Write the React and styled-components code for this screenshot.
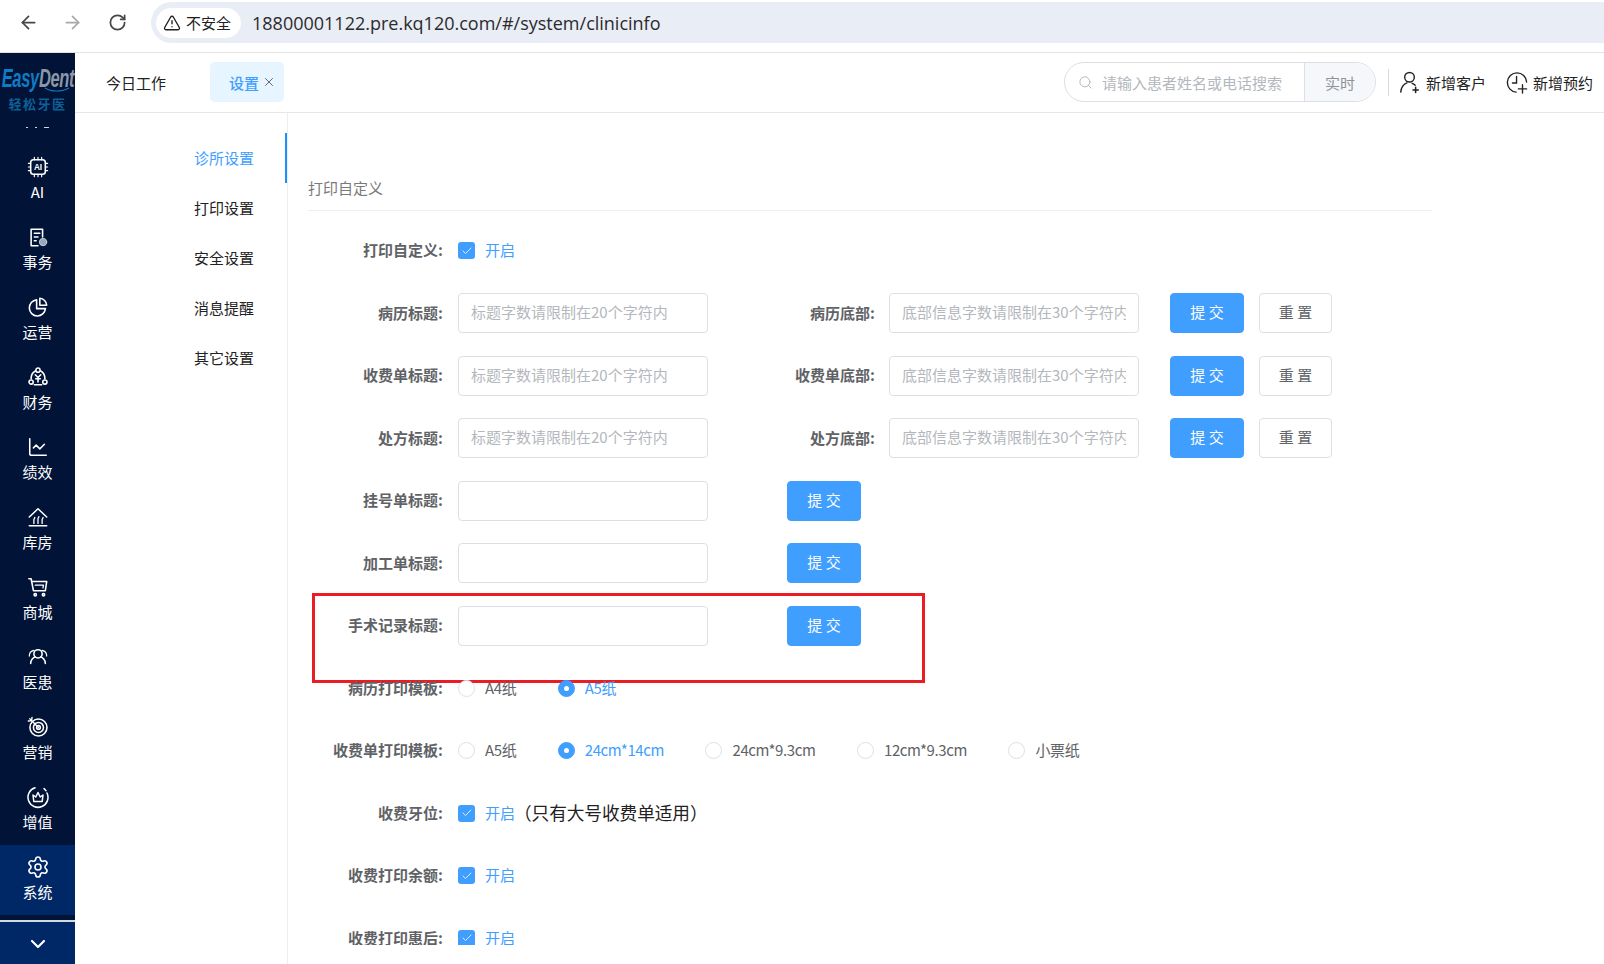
import React from 'react'
import styled, { createGlobalStyle } from 'styled-components'
import { ArrowLeft, ArrowRight, RotateCw, TriangleAlert, Search, ChevronDown, Settings, ChartLine, X, Check } from 'lucide-react'

const Global = createGlobalStyle`
  html, body { margin: 0; padding: 0; height: 100%; background: #fff; overflow: hidden; }
  body { font-family: "Noto Sans CJK SC", "Liberation Sans", sans-serif; font-size: 15px; }
  * { box-sizing: border-box; }
`

const Page = styled.div`
  width: 1604px;
  height: 964px;
  display: flex;
  flex-direction: column;
  overflow: hidden;
`

const ChromeBar = styled.div`
  height: 53px;
  flex: none;
  display: flex;
  align-items: flex-start;
  padding: 2px 0 0 17px;
  background: #fff;
  border-bottom: 1px solid #e2e2e2;
`

const ChromeBtn = styled.div`
  width: 22px;
  height: 41px;
  margin-right: ${({ $gap }) => $gap}px;
  display: flex;
  align-items: center;
  justify-content: center;
  color: ${({ $off }) => ($off ? '#a8a8a8' : '#474747')};
`

const AddressBar = styled.div`
  flex: 1;
  height: 41px;
  display: flex;
  align-items: center;
  padding-left: 5px;
  background: #e9edf6;
  border-radius: 21px 0 0 21px;
`

const Chip = styled.div`
  width: 85px;
  height: 30px;
  display: flex;
  align-items: center;
  gap: 5px;
  padding-left: 7px;
  background: #fff;
  border-radius: 15px;
  font-size: 15px;
  color: #1f1f1f;
`

const Url = styled.span`
  margin-left: 11px;
  font-family: "Open Sans", sans-serif;
  font-size: 18px;
  color: #2b2b2b;
`

const Body = styled.div`
  flex: 1;
  display: flex;
  min-height: 0;
`

const Sidebar = styled.aside`
  width: 75px;
  flex: none;
  display: flex;
  flex-direction: column;
  background: #011337;
`

const LogoBox = styled.div`
  height: 59px;
  flex: none;
  position: relative;
  display: flex;
  flex-direction: column;
  align-items: center;
  padding-top: 12px;
  overflow: hidden;
`

const LogoText = styled.div`
  font-family: "Liberation Sans", sans-serif;
  font-style: italic;
  font-weight: 700;
  font-size: 25px;
  line-height: 26px;
  letter-spacing: -0.5px;
  white-space: nowrap;
  color: #0f7cc4;
  transform: scaleX(0.66);
`

const LogoGrey = styled.span`
  color: #8a97a6;
`

const LogoSmile = styled.svg`
  position: absolute;
  left: 44px;
  top: 34px;
`

const LogoSub = styled.div`
  margin-top: 5px;
  font-size: 13px;
  line-height: 15px;
  font-weight: 700;
  letter-spacing: 1.500px;
  color: #0d5f96;
`

const Dots = styled.div`
  height: 33px;
  flex: none;
  display: flex;
  justify-content: center;
  gap: 7px;
  padding-top: 15px;
`

const Dot = styled.span`
  width: ${({ $w }) => $w}px;
  height: 1px;
  background: #cfd6e2;
`

const NavItem = styled.div`
  height: 70px;
  flex: none;
  display: flex;
  flex-direction: column;
  align-items: center;
  padding-top: 12px;
  background: ${({ $active }) => ($active ? '#002766' : 'transparent')};
  color: #fff;
`

const NavIcon = styled.div`
  width: 24px;
  height: 20px;
  display: flex;
  align-items: center;
  justify-content: center;
`

const NavLabel = styled.span`
  margin-top: 5px;
  font-size: 15px;
  line-height: 20px;
`

const Collapse = styled.div`
  margin-top: 5px;
  flex: 1;
  display: flex;
  justify-content: center;
  padding-top: 10px;
  background: #002766;
  border-top: 2px solid #d5d8de;
  color: #fff;
`

const Main = styled.div`
  flex: 1;
  min-width: 0;
  display: flex;
  flex-direction: column;
`

const Header = styled.header`
  height: 60px;
  flex: none;
  display: flex;
  align-items: center;
  padding: 0 11px 1px 31px;
  border-bottom: 1px solid #e6e6e6;
`

const WorkTab = styled.span`
  color: #222;
  font-size: 15px;
  margin-right: 44px;
`

const ActiveTab = styled.div`
  width: 74px;
  height: 40px;
  display: flex;
  align-items: center;
  padding-left: 19px;
  gap: 3px;
  border-radius: 5px;
  background: #e6f5ff;
  color: #409eff;
  font-size: 15px;
  font-weight: 500;
`

const CloseIcon = styled.span`
  display: flex;
  color: #555;
`

const Tools = styled.div`
  margin-left: auto;
  display: flex;
  align-items: center;
`

const SearchBox = styled.div`
  width: 312px;
  height: 40px;
  display: flex;
  align-items: stretch;
  border: 1px solid #dcdfe6;
  border-radius: 20px;
  overflow: hidden;
  color: #b4b7bd;
`

const SearchField = styled.div`
  flex: 1;
  display: flex;
  align-items: center;
  gap: 9px;
  padding-left: 13px;
  font-size: 15px;
`

const SearchTag = styled.div`
  width: 71px;
  display: flex;
  align-items: center;
  justify-content: center;
  background: #f5f7fa;
  border-left: 1px solid #dcdfe6;
  color: #909399;
  font-size: 15px;
`

const ToolDivider = styled.span`
  width: 1px;
  height: 27px;
  margin: 0 10px 0 12px;
  background: #d9d9d9;
`

const ToolLink = styled.div`
  display: flex;
  align-items: center;
  gap: ${({ $gap }) => $gap}px;
  margin-right: ${({ $mr }) => $mr || 0}px;
  color: #222;
  font-size: 15px;
`

const Content = styled.div`
  flex: 1;
  min-height: 0;
  display: flex;
`

const SubNav = styled.nav`
  width: 213px;
  flex: none;
  padding-top: 20px;
  border-right: 1px solid #eeeeee;
`

const SubItem = styled.div`
  height: 50px;
  display: flex;
  align-items: center;
  justify-content: flex-end;
  padding: 0 31px 2px 0;
  font-size: 15px;
  color: ${({ $active }) => ($active ? '#409eff' : '#222')};
  border-right: 2px solid ${({ $active }) => ($active ? '#1890ff' : 'transparent')};
`

const FormWrap = styled.div`
  width: 1144px;
  height: 832px;
  overflow: hidden;
  padding: 66px 0 0 20px;
`

const Title = styled.div`
  height: 32px;
  line-height: 18px;
  border-bottom: 1px solid #eeeeee;
  color: #7a7a7a;
  font-size: 15px;
`

const Rows = styled.div`
  display: flex;
  flex-direction: column;
  gap: 22.5px;
  padding-top: 19.5px;
`

const Row = styled.div`
  position: relative;
  height: 40px;
  flex: none;
  display: flex;
  align-items: center;
`

const Label = styled.div`
  width: 135px;
  margin-right: 15px;
  padding-bottom: 2px;
  text-align: right;
  color: #606266;
  font-size: 15px;
  font-weight: 700;
  white-space: nowrap;
`

const FootLabel = styled(Label)`
  width: 167px;
  margin-right: 14px;
`

const Input = styled.input`
  width: 250px;
  height: 40px;
  padding: 0 12px 3px;
  border: 1px solid #dcdfe6;
  border-radius: 4px;
  outline: none;
  background: #fff;
  font-family: inherit;
  font-size: 15px;
  &::placeholder { color: #b4b7bd; }
`

const Button = styled.button`
  width: ${({ $reset }) => ($reset ? 73 : 74)}px;
  height: 40px;
  margin-left: ${({ $ml }) => $ml}px;
  padding: 0 0 3px;
  border: 1px solid ${({ $reset }) => ($reset ? '#dcdfe6' : '#409eff')};
  border-radius: 4px;
  background: ${({ $reset }) => ($reset ? '#fff' : '#409eff')};
  color: ${({ $reset }) => ($reset ? '#606266' : '#fff')};
  font-family: inherit;
  font-size: 15px;
`

const CheckItem = styled.div`
  display: flex;
  align-items: center;
  gap: 10px;
  color: #409eff;
`

const CheckMark = styled.span`
  width: 17px;
  height: 17px;
  display: flex;
  align-items: center;
  justify-content: center;
  border-radius: 3px;
  background: #409eff;
  color: #fff;
`

const OptionText = styled.span`
  padding-bottom: 2px;
`

const Note = styled.span`
  margin: 0 0 3px -1px;
  font-size: 17.7px;
  color: #222;
  letter-spacing: -0.1px;
`

const RadioItem = styled.div`
  display: flex;
  align-items: center;
  gap: 10px;
  margin-right: 41.5px;
  letter-spacing: -0.4px;
  color: ${({ $on }) => ($on ? '#409eff' : '#606266')};
`

const RadioDot = styled.span`
  width: 17px;
  height: 17px;
  display: flex;
  align-items: center;
  justify-content: center;
  border-radius: 50%;
  border: 1px solid ${({ $on }) => ($on ? '#409eff' : '#dcdfe6')};
  background: ${({ $on }) => ($on ? '#409eff' : '#fff')};
  &::after {
    content: '';
    width: 5px;
    height: 5px;
    border-radius: 50%;
    background: #fff;
  }
`

const RedMark = styled.div`
  position: absolute;
  left: 4px;
  top: -13px;
  width: 613px;
  height: 90px;
  border: 3px solid #ed1c24;
  pointer-events: none;
`

const icon = { width: 22, height: 22, viewBox: '0 0 24 24', fill: 'none', stroke: 'currentColor', strokeWidth: 1.7, strokeLinecap: 'round', strokeLinejoin: 'round' }

const AiIcon = () => (
  <svg {...icon}>
    <rect x="4" y="4" width="16" height="16" rx="3" />
    <path d="M8 1.5V4M12 1.5V4M16 1.5V4M8 20v2.5M12 20v2.5M16 20v2.5M1.5 8H4M1.5 12H4M1.5 16H4M20 8h2.5M20 12h2.5M20 16h2.5" strokeWidth="1.3" />
    <text x="12" y="15.5" fontSize="9" fontWeight="700" fontFamily="Liberation Sans" textAnchor="middle" fill="currentColor" stroke="none">AI</text>
  </svg>
)
const TaskIcon = () => (
  <svg {...icon}>
    <path d="M17 12V3.5H4.5v18H12" />
    <path d="M8 8h6M8 12h4M8 16h2" />
    <circle cx="17.5" cy="17.5" r="4" fill="#9aa6ba" stroke="#cfd6e2" strokeWidth="1" />
  </svg>
)
const PieIcon = () => (
  <svg {...icon}>
    <path d="M10.5 4.2a8.8 8.8 0 1 0 9.6 9.6h-9.6z" />
    <path d="M14 2.5a8 8 0 0 1 7.5 7.5H14z" />
  </svg>
)
const FinanceIcon = () => (
  <svg {...icon}>
    <path d="M9 5.5C6 7 4.5 10 4.5 14M15 5.5c3 1.500 4.500 4.500 4.500 8.500M8 20.500h8" />
    <circle cx="12" cy="4.500" r="2.300" />
    <circle cx="4.500" cy="17.500" r="2.300" />
    <circle cx="19.500" cy="17.500" r="2.300" />
    <path d="M9 9.500l3 3 3-3M12 12.500v5M9.500 14h5" />
  </svg>
)
const StoreIcon = () => (
  <svg {...icon}>
    <path d="M2.500 12L12 3l9.500 9M5 11.500" />
    <path d="M2.500 21.500h19" />
    <path d="M7.500 19v-4c0-1 1-1.500 1-2.500M12 19v-5c0-1 1-1.500 1-2.500M16.500 19v-4c0-1 1-1.500 1-2.500" strokeWidth="1.400" />
  </svg>
)
const CartIcon = () => (
  <svg {...icon}>
    <path d="M2 3h2.500l2.500 13h13l1.500-10H6" />
    <path d="M9 10h9l-.6 3" strokeWidth="1.400" />
    <circle cx="9" cy="20.500" r="1.300" />
    <circle cx="18" cy="20.500" r="1.300" />
  </svg>
)
const PeopleIcon = () => (
  <svg {...icon}>
    <circle cx="12" cy="8.500" r="4.500" />
    <path d="M4 19c0-4 3-6.500 5-7M20 19c0-4-3-6.500-5-7" />
    <path d="M7.500 4.800C4 5.500 2.500 8 2.500 11M16.500 4.800c3.500.7 5 3.200 5 6.200M1.500 16.500" strokeWidth="1.300" />
  </svg>
)
const TargetIcon = () => (
  <svg {...icon}>
    <circle cx="12.500" cy="12.500" r="9.300" />
    <circle cx="12.500" cy="12.500" r="5.500" />
    <circle cx="12.500" cy="12.500" r="2" />
    <path d="M12.500 12.500L3 3M1.500 5.500L5 5l.5-3.500" strokeWidth="1.500" />
  </svg>
)
const CrownIcon = () => (
  <svg {...icon} width={24} height={24} strokeWidth={1.5}>
    <path d="M9 2.800A10 10 0 1 0 21 8" />
    <path d="M18 3.500L20 5.800" />
    <path d="M7 10l2.800 2 2.200-4.500 2.200 4.500 2.800-2-.8 6.500H7.800z" />
  </svg>
)
const PersonPlus = () => (
  <svg width="21" height="23" viewBox="0 0 24 26" fill="none" stroke="currentColor" strokeWidth="1.600" strokeLinecap="round">
    <circle cx="12" cy="7" r="5.500" />
    <path d="M2 24c.5-6 3.500-9 7-10.500M15 14c1.500.5 2.500 1.200 3.500 2.200" />
    <path d="M19 18.500v6M16 21.500h6" strokeWidth="1.800" />
  </svg>
)
const ClockPlus = () => (
  <svg width="22" height="23" viewBox="0 0 24 25" fill="none" stroke="currentColor" strokeWidth="1.500" strokeLinecap="round">
    <path d="M11 23A10.500 10.500 0 1 1 22.500 12" />
    <path d="M11.500 6v7H7" />
    <path d="M18 15v9M13.500 19.500h9" />
  </svg>
)

const navItems = [
  ['AI', <AiIcon />],
  ['事务', <TaskIcon />],
  ['运营', <PieIcon />],
  ['财务', <FinanceIcon />],
  ['绩效', <ChartLine size={22} strokeWidth={1.7} />],
  ['库房', <StoreIcon />],
  ['商城', <CartIcon />],
  ['医患', <PeopleIcon />],
  ['营销', <TargetIcon />],
  ['增值', <CrownIcon />],
  ['系统', <Settings size={24} strokeWidth={1.6} />],
]

const subItems = ['诊所设置', '打印设置', '安全设置', '消息提醒', '其它设置']
const titlePlaceholder = '标题字数请限制在20个字符内'
const footPlaceholder = '底部信息字数请限制在30个字符内'

const Enabled = () => (
  <CheckItem>
    <CheckMark><Check size={12} strokeWidth={1.6} /></CheckMark>
    <OptionText>开启</OptionText>
  </CheckItem>
)

const Radio = ({ on, children }) => (
  <RadioItem $on={on}>
    <RadioDot $on={on} />
    <OptionText>{children}</OptionText>
  </RadioItem>
)

const FullRow = ({ title, foot }) => (
  <Row>
    <Label>{title}:</Label>
    <Input placeholder={titlePlaceholder} />
    <FootLabel>{foot}:</FootLabel>
    <Input placeholder={footPlaceholder} />
    <Button $ml={31}>提 交</Button>
    <Button $ml={15} $reset>重 置</Button>
  </Row>
)

const ShortRow = ({ title, children }) => (
  <Row>
    <Label>{title}:</Label>
    <Input />
    <Button $ml={79}>提 交</Button>
    {children}
  </Row>
)

export default function App() {
  return (
    <Page>
      <Global />
      <ChromeBar>
        <ChromeBtn $gap={22}><ArrowLeft size={21} strokeWidth={2} /></ChromeBtn>
        <ChromeBtn $gap={23} $off><ArrowRight size={21} strokeWidth={2} /></ChromeBtn>
        <ChromeBtn $gap={23}><RotateCw size={19} strokeWidth={2.2} /></ChromeBtn>
        <AddressBar>
          <Chip><TriangleAlert size={18} strokeWidth={1.8} />不安全</Chip>
          <Url>18800001122.pre.kq120.com/#/system/clinicinfo</Url>
        </AddressBar>
      </ChromeBar>
      <Body>
        <Sidebar>
          <LogoBox>
            <LogoText>Easy<LogoGrey>Dent</LogoGrey></LogoText>
            <LogoSmile width="26" height="6" viewBox="0 0 26 6" fill="none" stroke="#0f7cc4" strokeWidth="1.200">
              <path d="M1 1c6 4 17 4 24 0" />
            </LogoSmile>
            <LogoSub>轻松牙医</LogoSub>
          </LogoBox>
          <Dots>
            <Dot $w={2} />
            <Dot $w={2} />
            <Dot $w={5} />
          </Dots>
          {navItems.map(([label, glyph]) => (
            <NavItem key={label} $active={label === '系统'}>
              <NavIcon>{glyph}</NavIcon>
              <NavLabel>{label}</NavLabel>
            </NavItem>
          ))}
          <Collapse><ChevronDown size={24} strokeWidth={2.2} /></Collapse>
        </Sidebar>
        <Main>
          <Header>
            <WorkTab>今日工作</WorkTab>
            <ActiveTab>设置<CloseIcon><X size={14} strokeWidth={1.5} /></CloseIcon></ActiveTab>
            <Tools>
              <SearchBox>
                <SearchField><Search size={15} strokeWidth={1.6} />请输入患者姓名或电话搜索</SearchField>
                <SearchTag>实时</SearchTag>
              </SearchBox>
              <ToolDivider />
              <ToolLink $gap={6} $mr={20}><PersonPlus />新增客户</ToolLink>
              <ToolLink $gap={5}><ClockPlus />新增预约</ToolLink>
            </Tools>
          </Header>
          <Content>
            <SubNav>
              {subItems.map((name, i) => (
                <SubItem key={name} $active={i === 0}>{name}</SubItem>
              ))}
            </SubNav>
            <FormWrap>
              <Title>打印自定义</Title>
              <Rows>
                <Row><Label>打印自定义:</Label><Enabled /></Row>
                <FullRow title="病历标题" foot="病历底部" />
                <FullRow title="收费单标题" foot="收费单底部" />
                <FullRow title="处方标题" foot="处方底部" />
                <ShortRow title="挂号单标题" />
                <ShortRow title="加工单标题" />
                <ShortRow title="手术记录标题"><RedMark /></ShortRow>
                <Row>
                  <Label>病历打印模板:</Label>
                  <Radio>A4纸</Radio>
                  <Radio on>A5纸</Radio>
                </Row>
                <Row>
                  <Label>收费单打印模板:</Label>
                  <Radio>A5纸</Radio>
                  <Radio on>24cm*14cm</Radio>
                  <Radio>24cm*9.3cm</Radio>
                  <Radio>12cm*9.3cm</Radio>
                  <Radio>小票纸</Radio>
                </Row>
                <Row><Label>收费牙位:</Label><Enabled /><Note>（只有大号收费单适用）</Note></Row>
                <Row><Label>收费打印余额:</Label><Enabled /></Row>
                <Row><Label>收费打印惠后:</Label><Enabled /></Row>
              </Rows>
            </FormWrap>
          </Content>
        </Main>
      </Body>
    </Page>
  )
}
